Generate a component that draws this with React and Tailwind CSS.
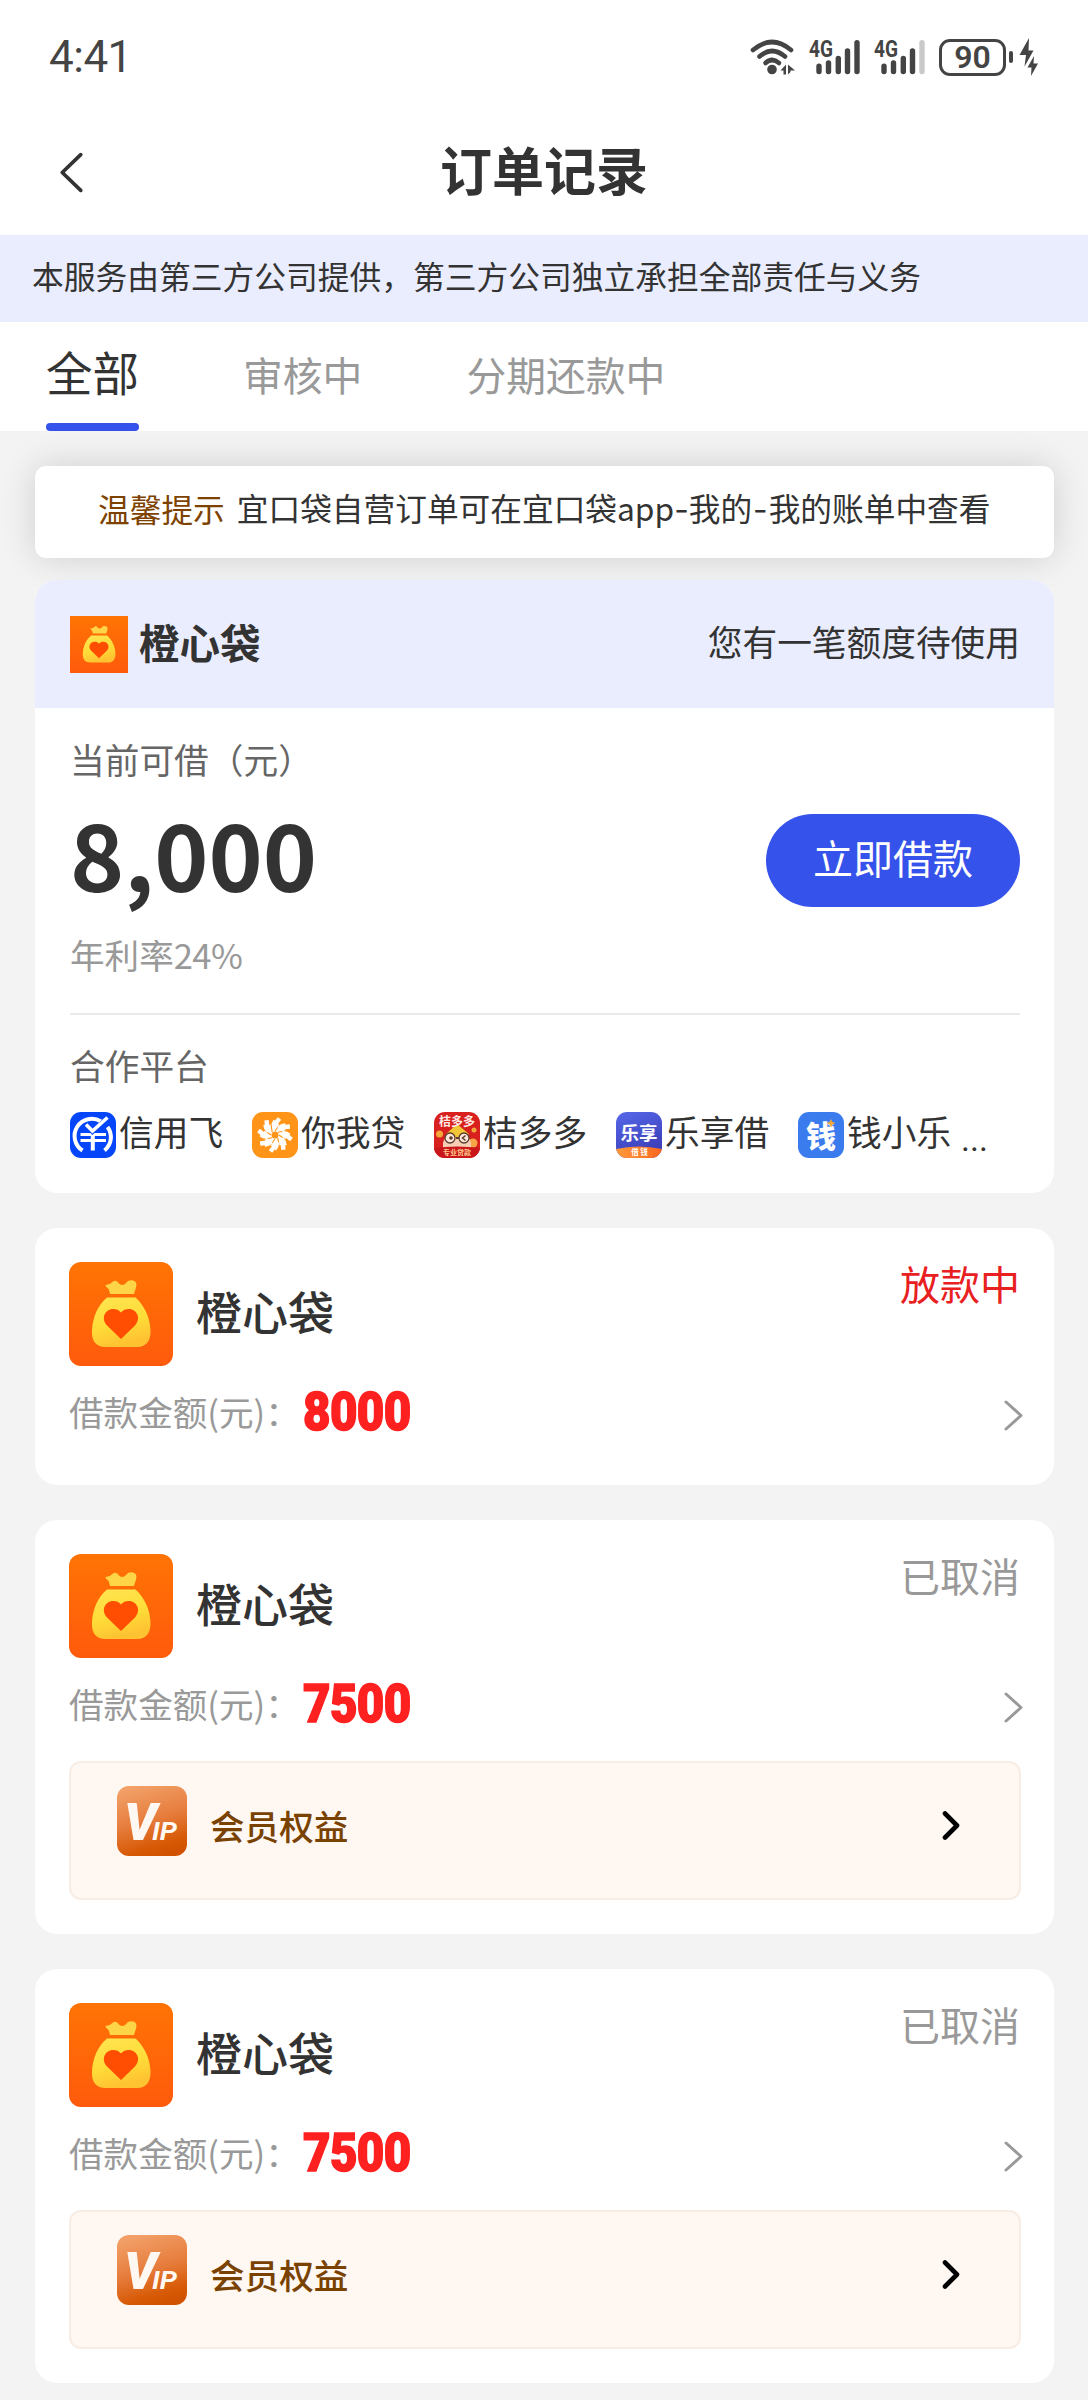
import { useState } from "react";

const TABS = ["全部", "审核中", "分期还款中"];

const ORDERS = [
  { id: 1, name: "橙心袋", amount: 8000, status: "放款中", active: true, vip: false },
  { id: 2, name: "橙心袋", amount: 7500, status: "已取消", active: false, vip: true },
  { id: 3, name: "橙心袋", amount: 7500, status: "已取消", active: false, vip: true },
];

const WifiIcon = () => (
  <svg viewBox="0 0 45 36" className="h-[36px] w-[45px]" fill="none">
    <g stroke="#444" strokeWidth="4.6" strokeLinecap="round">
      <path d="M3 11Q22-5 41 11" />
      <path d="M9.5 17.5Q22 6.500 35 17.500" />
      <path d="M15.500 24Q22 18 29 24" />
    </g>
    <circle cx="22" cy="30.500" r="4.800" fill="#444" />
    <path d="M30.500 31.500l5.500-6v10h-2.500v-4zM38 25.500v10l2.500-2.500v-1.500h4.500L38 25.500z" fill="#444" />
  </svg>
);

const SignalIcon = ({ weak }) => (
  <svg viewBox="0 0 51 36" className="h-[36px] w-[51px] overflow-visible">
    <text
      x="0"
      y="18"
      fill="#444"
      textLength="24"
      lengthAdjust="spacingAndGlyphs"
      className="font-['Roboto'] text-[24px] font-bold"
    >
      4G
    </text>
    <g stroke="#444" strokeWidth="5.400" strokeLinecap="round">
      <path d="M10 27.300V32.500M19.500 24V32.500M29.300 19.500V32.500M38.500 12V32.500" />
      <path d="M48 3.700V32.500" stroke={weak ? "#c9c9c9" : "#444"} />
    </g>
  </svg>
);

const BoltIcon = () => (
  <svg viewBox="0 0 19 38" className="h-[38px] w-[19px]" fill="#444">
    <path d="M10 0L.5 17H7L5.500 28.500L14.500 12.500H9.500z" />
    <path d="M15 18L8.500 29.500H12.500L12 38L19 25.500H14.500z" />
  </svg>
);

const Chevron = ({ className, strokeWidth = 3, d = "M2 2L17 15.500L2 29" }) => (
  <svg
    viewBox="0 0 19 31"
    className={className}
    fill="none"
    stroke="currentColor"
    strokeWidth={strokeWidth}
    strokeLinecap="round"
    strokeLinejoin="round"
  >
    <path d={d} />
  </svg>
);

const BagLogo = ({ className }) => (
  <svg viewBox="0 0 104 104" preserveAspectRatio="none" className={className}>
    <defs>
      <linearGradient id="bag-bg" x1="0" y1="0" x2="0" y2="1">
        <stop offset="0" stopColor="#ff7404" />
        <stop offset="1" stopColor="#ff5a0c" />
      </linearGradient>
      <linearGradient id="bag-body" x1="0" y1="0" x2="0.300" y2="1">
        <stop offset="0" stopColor="#ffe552" />
        <stop offset="0.600" stopColor="#ffdc38" />
        <stop offset="1" stopColor="#ffc332" />
      </linearGradient>
    </defs>
    <rect width="104" height="104" fill="url(#bag-bg)" />
    <path
      d="M36.500 23c3-.3 5.500-1.500 7.500-3.500 2-1.500 4-.5 5.500 1.500 2 2.500 5.500 2.500 7.500 0 2-2.500 4.500-3 7-2.500 3.500.7 4 4 3 7L65 32H41l-1-4c-.6-2.300-3.500-2.800-3.500-5z"
      fill="#ffd548"
    />
    <path
      d="M38 35.500H66.500C75 43 81 55 81.500 68 82 79 77 85 68 85H36.500C27 85 22.500 79 23 69 23.500 55 29 43 38 35.500z"
      fill="url(#bag-body)"
    />
    <path
      d="M52 77L38 63.500C31 55.500 37 47 44 47c3.500 0 6 1 8 3.500 2-2.500 4.500-3.500 8-3.500 7 0 13 8.500 6 16.500z"
      fill="#ff4d02"
    />
  </svg>
);

const CreditFlyIcon = () => (
  <svg viewBox="0 0 46 46" className="size-[46px] rounded-[11px]">
    <rect width="46" height="46" fill="#0646fa" />
    <g fill="none" stroke="#fff">
      <path d="M12.500 38.500A17 17 0 0 1 31 9.500M37.500 15A17 17 0 0 1 34.500 38.500" strokeWidth="4" />
      <path d="M10.500 22.500H36M10.500 28.500H36" strokeWidth="3.200" />
      <path d="M22.800 21V38.500" strokeWidth="4" />
      <path d="M16 12L22.500 19.500L38 6" stroke="#0646fa" strokeWidth="5" />
      <path d="M16 12.500L22.500 19L37.500 5.500" strokeWidth="3.600" />
    </g>
  </svg>
);

const PETALS = [0, 45, 90, 135, 180, 225, 270, 315];

const PinwheelIcon = () => (
  <svg viewBox="0 0 46 46" className="size-[46px] rounded-[11px]">
    <rect width="46" height="46" fill="#ff9418" />
    <circle cx="23" cy="23" r="7.500" fill="none" stroke="#fff" strokeWidth="8" />
    {PETALS.map((deg) => (
      <g key={deg} transform={`rotate(${deg} 23 23)`} fill="none">
        <path d="M20 16L27.500 6.500" stroke="#fff" strokeWidth="4.400" />
        <path d="M20 12L22.500 8" stroke="#fff" strokeWidth="1.600" />
        <path d="M23 19L30 9.500" stroke="#ff9418" strokeWidth="1.100" />
      </g>
    ))}
  </svg>
);

const OwlIcon = () => (
  <svg viewBox="0 0 46 46" className="size-[46px] rounded-[11px] font-['Noto_Sans_CJK_SC']">
    <rect width="46" height="46" fill="#d8201f" />
    <circle cx="5.500" cy="22" r="3.500" fill="#f2a63b" />
    <circle cx="39" cy="31" r="4.500" fill="#f6a445" />
    <circle cx="40" cy="18" r="2.500" fill="#f2a63b" />
    <path d="M9 37V31C10 26 14 21 23 21s13 5 14 10v6z" fill="#f6cfb4" />
    <path d="M12 22L23 12L35 22L30 26H16z" fill="#f1c637" />
    <path d="M22 26h3" stroke="#5b3a30" strokeWidth="2" />
    <g fill="#fbe6d8" stroke="#5b3a30" strokeWidth="1.300">
      <circle cx="16" cy="26" r="5" />
      <circle cx="30" cy="26" r="5" />
    </g>
    <circle cx="17" cy="26" r="1.800" fill="#5b3a30" />
    <path d="M31.500 23.500L28.500 26L31.500 28.500" fill="none" stroke="#5b3a30" strokeWidth="1.500" />
    <path d="M0 36Q23 33 46 36V46H0z" fill="#c9161b" />
    <text x="23" y="14" textAnchor="middle" fill="#ffeae4" className="text-[12px] font-bold">
      桔多多
    </text>
    <text x="23" y="43" textAnchor="middle" fill="#ffc78a" className="text-[7px] font-bold">
      专业贷款
    </text>
  </svg>
);

const EnjoyIcon = () => (
  <svg viewBox="0 0 46 46" className="size-[46px] rounded-[11px] font-['Noto_Sans_CJK_SC']">
    <defs>
      <linearGradient id="enjoy-bg" x1="0" y1="0" x2="0.400" y2="1">
        <stop offset="0" stopColor="#5568ea" />
        <stop offset="1" stopColor="#3c3fb8" />
      </linearGradient>
      <linearGradient id="enjoy-band" x1="0" y1="0" x2="1" y2="0">
        <stop offset="0" stopColor="#ff9a3c" />
        <stop offset="1" stopColor="#f9671f" />
      </linearGradient>
    </defs>
    <rect width="46" height="46" fill="url(#enjoy-bg)" />
    <path d="M0 37Q23 32 46 37V46H0z" fill="url(#enjoy-band)" />
    <text x="23" y="27.500" textAnchor="middle" fill="#fff" className="text-[18.500px] font-bold">
      乐享
    </text>
    <text x="23.500" y="43.300" textAnchor="middle" fill="#fff" className="text-[7.500px] font-bold">
      借 钱
    </text>
  </svg>
);

const MoneyIcon = () => (
  <svg viewBox="0 0 46 46" className="size-[46px] rounded-[11px] font-['Noto_Sans_CJK_SC']">
    <rect width="46" height="46" fill="#3a7bee" />
    <text x="23" y="35" textAnchor="middle" fill="#fff" className="text-[30px] font-black">
      钱
    </text>
    <path d="M33 7l1.500 3 3 1-3 1.500L33 15.500l-1.500-3-3-1.500 3-1z" fill="#f3a73a" />
  </svg>
);

const VipIcon = () => (
  <svg viewBox="0 0 70 70" className="size-[70px] rounded-[12px]">
    <defs>
      <linearGradient id="vip-bg" x1="0.300" y1="0" x2="0.600" y2="1">
        <stop offset="0" stopColor="#f2a068" />
        <stop offset="0.500" stopColor="#e67c3c" />
        <stop offset="0.850" stopColor="#d75a06" />
        <stop offset="1" stopColor="#d15200" />
      </linearGradient>
    </defs>
    <rect width="70" height="70" fill="url(#vip-bg)" />
    <g fill="#fff8f2" className="font-['Roboto'] italic">
      <text
        x="7"
        y="54"
        textLength="33"
        lengthAdjust="spacingAndGlyphs"
        className="text-[51px] font-black"
      >
        V
      </text>
      <text
        x="35"
        y="54"
        textLength="25"
        lengthAdjust="spacingAndGlyphs"
        className="text-[25px] font-bold"
      >
        IP
      </text>
    </g>
  </svg>
);

const PARTNERS = [
  { name: "信用飞", Icon: CreditFlyIcon },
  { name: "你我贷", Icon: PinwheelIcon },
  { name: "桔多多", Icon: OwlIcon },
  { name: "乐享借", Icon: EnjoyIcon },
  { name: "钱小乐", Icon: MoneyIcon },
];

const StatusBar = () => (
  <div className="flex h-[114px] items-center justify-between pr-[50px] pl-[49px] text-[#444]">
    <span className="font-['Roboto'] text-[44px] leading-none tracking-[-0.500px]">4:41</span>
    <div className="flex items-center">
      <WifiIcon />
      <span className="ml-[14px]">
        <SignalIcon />
      </span>
      <span className="ml-[14px]">
        <SignalIcon weak />
      </span>
      <span className="ml-[14px] flex h-[37px] w-[67px] items-center justify-center rounded-[11px] border-[3px] border-[#444] font-['Roboto'] text-[32px] leading-none font-semibold">
        90
      </span>
      <span className="mr-[6px] ml-[3px] h-[12px] w-[4px] rounded-full bg-[#444]" />
      <BoltIcon />
    </div>
  </div>
);

const OfferCard = () => (
  <section className="mt-[22px] overflow-hidden rounded-[22px] bg-white">
    <div className="flex h-[128px] items-center justify-between bg-[#eaedfd] pr-[34px] pl-[35px]">
      <div className="flex items-center gap-[11px]">
        <BagLogo className="h-[57px] w-[58px]" />
        <span className="pb-[4px] text-[40.500px] leading-[56px] font-bold">橙心袋</span>
      </div>
      <span className="pb-[6px] text-[34.700px] leading-[50px]">您有一笔额度待使用</span>
    </div>
    <div className="pr-[34px] pl-[35px]">
      <p className="pt-[26px] text-[34.700px] leading-[50px] text-[#666]">当前可借（元）</p>
      <div className="mt-[16px] flex h-[112px] items-center justify-between">
        <span className="pb-[8px] text-[92px] leading-[112px] font-bold">8,000</span>
        <button
          type="button"
          className="mt-[9px] h-[93px] w-[254px] rounded-full bg-[#3552ea] pb-[7px] text-[40px] text-white"
        >
          立即借款
        </button>
      </div>
      <p className="mt-[17px] text-[34.600px] leading-[50px] text-[#999]">
        年利率<span className="tracking-[-0.600px]">24%</span>
      </p>
      <div className="mt-[34px] h-[2px] bg-[#ebebeb]" />
      <p className="mt-[25px] text-[34.700px] leading-[50px] text-[#666]">合作平台</p>
      <ul className="mt-[22px] flex h-[46px] items-center">
        {PARTNERS.map(({ name, Icon }) => (
          <li key={name} className="flex w-[182px] shrink-0 items-center gap-[3px]">
            <Icon />
            <span className="pb-[8px] text-[34.700px] leading-[46px] whitespace-nowrap">{name}</span>
          </li>
        ))}
        <li className="-ml-[19px] pt-[8px] font-['Roboto'] text-[34px] leading-[30px]">...</li>
      </ul>
      <div className="h-[35px]" />
    </div>
  </section>
);

const OrderCard = ({ order }) => (
  <section className="mt-[35px] rounded-[22px] bg-white px-[34px] pt-[34px] pb-[34px]">
    <div className="flex h-[104px] justify-between">
      <div className="flex items-center">
        <BagLogo className="size-[104px] rounded-[12px]" />
        <span className="ml-[23px] pb-[9px] text-[46px] leading-[60px] font-medium">
          {order.name}
        </span>
      </div>
      <span
        className={
          order.active
            ? "-mt-[7px] text-[40px] leading-[56px] text-[#e8201f]"
            : "-mt-[7px] text-[40px] leading-[56px] text-[#999]"
        }
      >
        {order.status}
      </span>
    </div>
    <div className="mt-[16px] flex h-[58px] items-center">
      <span className="text-[34.600px] leading-[50px] text-[#999]">借款金额(元)：</span>
      <span className="ml-[3px] origin-left scale-x-88 pt-px font-['Roboto'] text-[54px] leading-none font-black tracking-[-0.700px] text-[#ff2020] [-webkit-text-stroke:1.500px_#ff2020]">
        {order.amount}
      </span>
      <Chevron className="-mr-[3px] mt-[8px] ml-auto h-[31px] w-[19px] text-[#999]" />
    </div>
    {order.vip ? (
      <div className="mt-[29px] -mr-px flex h-[139px] rounded-[12px] border-2 border-[#f8ede4] bg-[#fef7f2] pt-[23px] pr-[58px] pl-[46px]">
        <VipIcon />
        <span className="mt-[14px] ml-[23px] text-[34.600px] leading-[50px] font-medium text-[#7a4200]">
          会员权益
        </span>
        <Chevron
          className="mt-[24px] ml-auto h-[31px] w-[19px] text-black"
          strokeWidth={4.6}
          d="M3 3.500L15 15.500L3 27.500"
        />
      </div>
    ) : (
      <div className="h-[11px]" />
    )}
  </section>
);

const App = () => {
  const [tab, setTab] = useState(0);

  return (
    <div className="h-[2400px] w-[1088px] overflow-hidden bg-[#f3f3f3] font-['Noto_Sans_CJK_SC',sans-serif] text-[#333]">
      <header className="bg-white">
        <StatusBar />
        <div className="flex h-[121px] items-center justify-between px-[58px] pb-[6px]">
          <Chevron
            className="mt-[2px] h-[41px] w-[27px]"
            strokeWidth={2.8}
            d="M16.500 2L2.500 15.500L16.500 29"
          />
          <h1 className="pb-[5px] text-[52px] leading-[72px] font-bold">订单记录</h1>
          <span className="w-[27px]" />
        </div>
      </header>

      <p className="h-[87px] bg-[#eaedfd] pl-[32px] text-[31.750px] leading-[81px] whitespace-nowrap">
        本服务由第三方公司提供，第三方公司独立承担全部责任与义务
      </p>

      <nav className="flex h-[109px] bg-white pl-[46px]">
        {TABS.map((label, index) => (
          <button
            key={label}
            type="button"
            onClick={() => setTab(index)}
            className={
              index === tab
                ? "mr-[104px] flex flex-col justify-between text-[46.500px] leading-[98px]"
                : "mr-[104px] pb-[6px] text-[39.800px] leading-[102px] text-[#999]"
            }
          >
            {label}
            {index === tab && <span className="h-[8px] w-full rounded-full bg-[#3552ea]" />}
          </button>
        ))}
      </nav>

      <main className="pr-[34px] pl-[35px] pt-[35px]">
        <div className="flex h-[92px] items-center gap-[12px] rounded-[11px] bg-white pl-[63px] text-[31.700px] leading-[84px] whitespace-nowrap shadow-[0_0_35px_rgba(0,0,0,0.15)]">
          <span className="pb-[8px] text-[#7d4200]">温馨提示</span>
          <span className="pb-[7px]">
            宜口袋自营订单可在宜口袋app
            <span className="font-['Inter']">-</span>
            我的
            <span className="px-px font-['Inter']">-</span>
            我的账单中查看
          </span>
        </div>
        <OfferCard />
        {ORDERS.map((order) => (
          <OrderCard key={order.id} order={order} />
        ))}
      </main>
    </div>
  );
};

export default App;
